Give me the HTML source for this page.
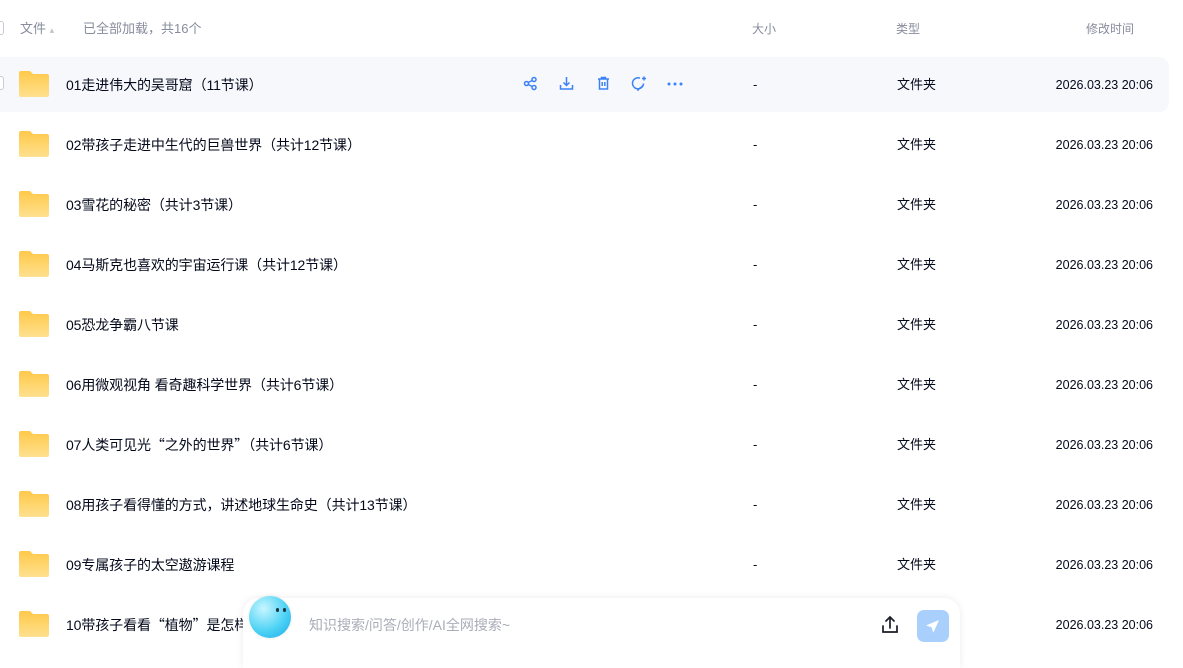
<!DOCTYPE html>
<html><head><meta charset="utf-8"><style>
*{margin:0;padding:0;box-sizing:border-box}
body{width:1183px;height:653px;overflow:hidden;background:#fff;font-family:"Liberation Sans","Noto Sans CJK SC",sans-serif;position:relative;color:#03081a}
.h{position:absolute;top:19px;font-size:13px;line-height:20px;color:#878c9c}
.row{position:absolute;left:0;width:1169px;height:55px}
.row.hl{background:#f6f8fc;border-radius:0 10px 10px 0}
.cb{position:absolute;left:-8px;top:19px;width:12px;height:14px;border:1px solid #c8ccd6;border-radius:3px;background:#fff}
.fd{position:absolute;left:19px;top:14px;width:30px;height:26px}
.nm,.sz,.tp,.dt{position:absolute;top:18px;line-height:20px;height:20px;white-space:nowrap}
.nm{left:66px;font-size:14px;letter-spacing:-0.1px}
.sz{left:753px;font-size:13px}
.tp{left:897px;font-size:13px}
.dt{right:16px;font-size:12.5px}
.q{font-family:"Noto Sans CJK SC",sans-serif}
.ic{position:absolute;top:19px}
.box{position:absolute;left:243px;top:598px;width:717px;height:70px;background:#fff;border-radius:16px 16px 0 0;box-shadow:0 0 8px rgba(0,0,0,.08)}
</style></head><body>
<div style="position:absolute;left:-8px;top:21px;width:12px;height:14px;border:1px solid #c8ccd6;border-radius:3px"></div>
<div class="h" style="left:20px">文件 <span style="font-size:9px;color:#c0c4cc">▴</span></div>
<div class="h" style="left:83px">已全部加载，共16个</div>
<div class="h" style="left:752px;font-size:12px">大小</div>
<div class="h" style="left:896px;font-size:12px">类型</div>
<div class="h" style="left:1086px;font-size:12px">修改时间</div>
<div id="rows"></div>
<script>
var names=["01走进伟大的吴哥窟（11节课）","02带孩子走进中生代的巨兽世界（共计12节课）","03雪花的秘密（共计3节课）","04马斯克也喜欢的宇宙运行课（共计12节课）","05恐龙争霸八节课","06用微观视角 看奇趣科学世界（共计6节课）","07人类可见光<span class=q>“</span>之外的世界<span class=q>”</span>（共计6节课）","08用孩子看得懂的方式，讲述地球生命史（共计13节课）","09专属孩子的太空遨游课程","10带孩子看看<span class=q>“</span>植物<span class=q>”</span>是怎样生长的"];
var h="";
var folder='<svg class="fd" viewBox="0 0 30 26"><defs><linearGradient id="g" x1="0" y1="0" x2="0" y2="1"><stop offset="0" stop-color="#ffc94a"/><stop offset="1" stop-color="#ffe08f"/></linearGradient></defs><path d="M2 0h9l3 3h14a2 2 0 0 1 2 2v19a2 2 0 0 1-2 2H2a2 2 0 0 1-2-2V2a2 2 0 0 1 2-2z" fill="url(#g)"/></svg>';
for(var i=0;i<10;i++){
var t=57+i*60;
h+='<div class="row'+(i==0?' hl':'')+'" style="top:'+t+'px">'+(i==0?'<div class="cb"></div>':'')+folder+'<div class="nm">'+names[i]+'</div><div class="sz">-</div><div class="tp">文件夹</div><div class="dt">2026.03.23 20:06</div>';
if(i==0){h+='<svg class="ic" style="left:523px" width="15" height="15" viewBox="0 0 15 15" fill="none" stroke="#3b82f6" stroke-width="1.5"><circle cx="3.5" cy="7.5" r="2"/><circle cx="11" cy="3.5" r="2"/><circle cx="11" cy="11.5" r="2"/><path d="M5.3 6.5l3.9-2M5.3 8.5l3.9 2"/></svg>'+
'<svg class="ic" style="left:559px" width="15" height="15" viewBox="0 0 15 15" fill="none" stroke="#3b82f6" stroke-width="1.5"><path d="M7.5 1v8M4.5 6.5l3 3 3-3M1.5 9v4h12V9"/></svg>'+
'<svg class="ic" style="left:596px" width="15" height="15" viewBox="0 0 15 15" fill="none" stroke="#3b82f6" stroke-width="1.5"><path d="M2 3h11M5.5 3V1.5h4V3M3.5 3v10h8V3M6.2 6v4M8.8 6v4"/></svg>'+
'<svg class="ic" style="left:631px" width="16" height="15" viewBox="0 0 16 15" fill="none" stroke="#3b82f6" stroke-width="1.5"><path d="M9 2.2A5.5 5.5 0 1 0 12.5 7.5c0 2-1.5 3.5-3.5 4.5l-2 2v-2"/><path d="M13 0.5v4M11 2.5h4"/></svg>'+
'<svg class="ic" style="left:667px;top:25px" width="16" height="4" viewBox="0 0 16 4"><circle cx="2" cy="2" r="1.5" fill="#3b82f6"/><circle cx="8" cy="2" r="1.5" fill="#3b82f6"/><circle cx="14" cy="2" r="1.5" fill="#3b82f6"/></svg>';}
h+='</div>';}
document.getElementById('rows').innerHTML=h;
</script>
<div class="box">
<div style="position:absolute;left:66px;top:17px;line-height:20px;font-size:14px;color:#a9adb8">知识搜索/问答/创作/AI全网搜索~</div>
<svg style="position:absolute;left:637px;top:17px" width="20" height="20" viewBox="0 0 20 20" fill="none" stroke="#1a1d26" stroke-width="1.7" stroke-linecap="round"><path d="M10 2v11M6 6l4-4 4 4M3 11v6h14v-6"/></svg>
<div style="position:absolute;left:674px;top:12px;width:32px;height:32px;border-radius:7px;background:#a9d0fd"><svg width="32" height="32" viewBox="0 0 32 32"><path d="M22 10L9 15.5l5.5 1.8 1.8 5.5z" fill="#fff"/></svg></div>
</div>
<div style="position:absolute;left:249px;top:596px;width:42px;height:42px;border-radius:50%;background:radial-gradient(circle at 35% 30%,#c8f6ff,#4fd3f5 55%,#1aa8e8);box-shadow:0 0 3px rgba(0,0,0,.1)"></div>
<div style="position:absolute;left:276px;top:608px;width:3px;height:4px;border-radius:2px;background:#234"></div>
<div style="position:absolute;left:283px;top:608px;width:3px;height:4px;border-radius:2px;background:#234"></div>
</body></html>
